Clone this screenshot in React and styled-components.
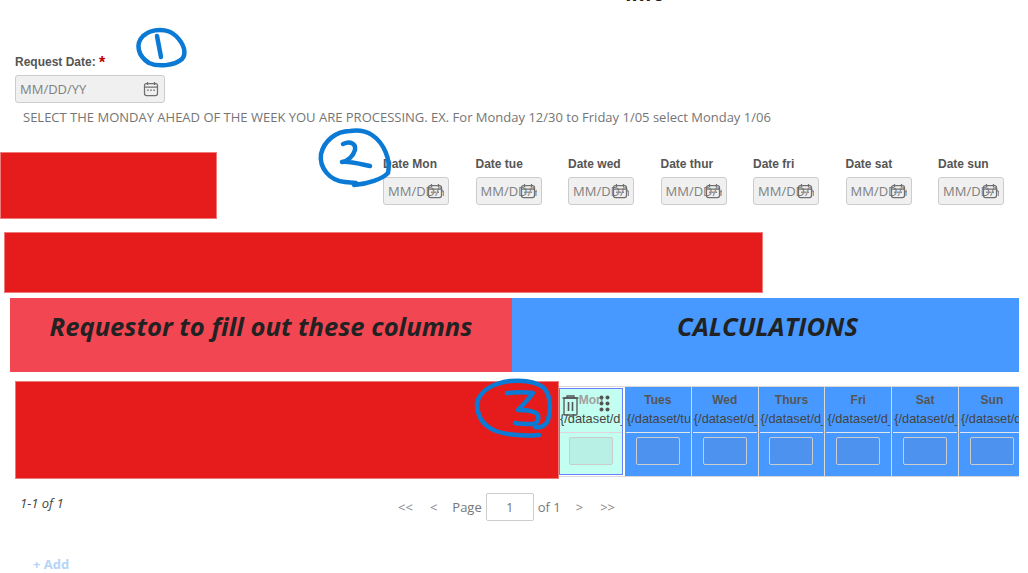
import React from 'react'
import styled, { createGlobalStyle } from 'styled-components'

const GlobalStyle = createGlobalStyle`
    html, body {
        margin: 0;
        padding: 0;
        background: #fff;
        overflow: hidden;
    }
    * {
        box-sizing: border-box;
    }
`

const days = ['Mon', 'tue', 'wed', 'thur', 'fri', 'sat', 'sun']

const columns = [
    { name: 'Mon', bind: '{/dataset/d_mon}' },
    { name: 'Tues', bind: '{/dataset/tues}' },
    { name: 'Wed', bind: '{/dataset/d_wed}' },
    { name: 'Thurs', bind: '{/dataset/d_thur}' },
    { name: 'Fri', bind: '{/dataset/d_fri}' },
    { name: 'Sat', bind: '{/dataset/d_sat}' },
    { name: 'Sun', bind: '{/dataset/d_sun}' },
]

const CalendarIcon = () => (
    <svg width="16" height="16" viewBox="0 0 16 16" fill="none" stroke="#707070" strokeWidth="1.25">
        <rect x="1.5" y="2.5" width="13" height="12" rx="2" />
        <path d="M1.5 6h13M4.5 1v3M11.5 1v3" />
        <path d="M4.2 9.2h1.4M7.3 9.2h1.4M10.4 9.2h1.4" strokeWidth="1.4" />
    </svg>
)

const DateField = ({ wide }) => (
    <DateBox $wide={wide}>
        <DateInput placeholder="MM/DD/YY" />
        <IconSlot>
            <CalendarIcon />
        </IconSlot>
    </DateBox>
)

const Annotations = () => (
    <Scribbles width="1028" height="573" viewBox="0 0 1028 573" fill="none" stroke="#0b7ad4" strokeWidth="4.5" strokeLinecap="round" strokeLinejoin="round">
        <path d="M143 36C152 28 168 28 176 36C184 44 187 53 182 59C174 66 158 67 149 63C138 56 135 44 143 36Z" />
        <path d="M157 36L161 57" />
        <path d="M350 131C336 131 324 141 321 154C319 168 330 181 345 182L356 183L354 185C368 184 382 179 388 173C391 160 384 143 372 135C366 131 358 130 350 131Z" />
        <path d="M343 144C350 141 356 143 355 150C353 156 348 161 342 162C349 161 360 164 370 166" />
        <path d="M477 403C480 390 494 383 510 381C522 380 536 381 544 388C551 396 551 410 548 420C546 426 540 428 535 427" />
        <path d="M477 403C477 416 483 426 496 431C510 436 526 436 539 435" />
        <path d="M507 393C516 392 525 392 533 393C528 400 522 406 518 410C526 410 535 411 538 415C539 420 537 424 532 424C526 424 520 424 515 423" />
    </Scribbles>
)

const App = () => (
    <Page>
        <GlobalStyle />
        <Title>Info</Title>

        <RequestSection>
            <FieldLabel>
                Request Date: <Required>*</Required>
            </FieldLabel>
            <DateField wide />
        </RequestSection>
        <Note>SELECT THE MONDAY AHEAD OF THE WEEK YOU ARE PROCESSING. EX. For Monday 12/30 to Friday 1/05 select Monday 1/06</Note>

        <DatesRow>
            <Redaction $width={217} $height={67} />
            <DatesGrid>
                {days.map((day) => (
                    <DateColumn key={day}>
                        <FieldLabel>Date {day}</FieldLabel>
                        <DateField />
                    </DateColumn>
                ))}
            </DatesGrid>
        </DatesRow>

        <WideRedaction>
            <Redaction $width={759} $height={61} />
        </WideRedaction>

        <Banner>
            <BannerCell $bg="#f34653" $shift={0}>Requestor to fill out these columns</BannerCell>
            <BannerCell $bg="#4799ff" $shift={4}>CALCULATIONS</BannerCell>
        </Banner>

        <TableRow>
            <Redaction $width={544} $height={98} />
            <Table>
                {columns.map((col, i) => (
                    <Column key={col.name} $selected={i === 0}>
                        <ColumnBody $selected={i === 0}>
                            <ColumnHead $selected={i === 0}>
                                <ColumnName $selected={i === 0}>{col.name}</ColumnName>
                                <ColumnBind $selected={i === 0}>{col.bind}</ColumnBind>
                            </ColumnHead>
                            <CellInput $selected={i === 0} />
                            {i === 0 && (
                                <ColumnTools>
                                    <svg width="17" height="21" viewBox="0 0 17 21" fill="none" stroke="#555" strokeWidth="1.3">
                                        <path d="M0.5 3h16M5 3V1h7v2" />
                                        <rect x="2" y="3" width="13" height="17" rx="1" />
                                        <path d="M6.5 7v9M10.5 7v9" strokeWidth="1.6" />
                                    </svg>
                                    <svg width="11" height="17" viewBox="0 0 11 17" fill="#555" stroke="none">
                                        <circle cx="2.5" cy="2.5" r="2" />
                                        <circle cx="8.5" cy="2.5" r="2" />
                                        <circle cx="2.5" cy="8.5" r="2" />
                                        <circle cx="8.5" cy="8.5" r="2" />
                                        <circle cx="2.5" cy="14.5" r="2" />
                                        <circle cx="8.5" cy="14.5" r="2" />
                                    </svg>
                                </ColumnTools>
                            )}
                        </ColumnBody>
                    </Column>
                ))}
            </Table>
        </TableRow>

        <PagerRow>
            <Count>1-1 of 1</Count>
            <Pager>
                <PagerItem $after={17}>&lt;&lt;</PagerItem>
                <PagerItem $after={15}>&lt;</PagerItem>
                <PagerItem $after={4} $text>Page</PagerItem>
                <PageInput defaultValue="1" />
                <PagerItem $before={4} $after={15} $text>of 1</PagerItem>
                <PagerItem $after={17}>&gt;</PagerItem>
                <PagerItem>&gt;&gt;</PagerItem>
            </Pager>
        </PagerRow>

        <AddLink>+ Add</AddLink>

        <Annotations />
    </Page>
)

export default App

const Page = styled.div`
    position: relative;
    width: 1028px;
    height: 573px;
    overflow: hidden;
    background: #fff;
    font-family: 'Open Sans', sans-serif;
`
const Title = styled.div`
    margin-top: -20px;
    padding-left: 625px;
    height: 28px;
    line-height: 28px;
    font-size: 20px;
    font-weight: 700;
    color: #222;
`
const RequestSection = styled.div`
    margin-top: 46px;
    padding-left: 15px;
    display: flex;
    flex-direction: column;
    gap: 5px;
`
const FieldLabel = styled.div`
    height: 16px;
    line-height: 16px;
    font-family: 'Liberation Sans', Arial, sans-serif;
    font-size: 12px;
    font-weight: 700;
    color: #555;
    white-space: nowrap;
`
const Required = styled.span`
    color: #c00000;
    font-size: 16px;
    line-height: 12px;
    vertical-align: -2px;
`
const DateBox = styled.div`
    position: relative;
    width: ${(p) => (p.$wide ? '150px' : '100%')};
    height: 28px;
`
const DateInput = styled.input`
    width: 100%;
    height: 100%;
    padding: 0 4px;
    background: #f0f0f0;
    border: 1px solid #ccc;
    border-radius: 3px;
    font-family: 'Open Sans', sans-serif;
    font-size: 13px;
    color: #777;
    outline: none;
    &::placeholder {
        color: #808080;
        opacity: 1;
    }
`
const IconSlot = styled.span`
    position: absolute;
    top: 6px;
    right: 6px;
    display: flex;
`
const Note = styled.div`
    margin-top: 5px;
    padding-left: 23px;
    height: 18px;
    line-height: 18px;
    font-size: 13px;
    color: #757575;
    white-space: nowrap;
`
const DatesRow = styled.div`
    margin-top: 26px;
    display: flex;
    align-items: flex-start;
`
const Redaction = styled.div`
    flex: none;
    width: ${(p) => p.$width}px;
    height: ${(p) => p.$height}px;
    background: #e61c1c;
    box-shadow: inset 0 0 0 1px #ee7a7a;
`
const DatesGrid = styled.div`
    margin-left: 166px;
    margin-top: 4px;
    display: grid;
    grid-template-columns: repeat(7, 66px);
    column-gap: 26.5px;
`
const DateColumn = styled.div`
    display: flex;
    flex-direction: column;
    gap: 5px;
`
const WideRedaction = styled.div`
    margin: 13px 0 0 4px;
`
const Banner = styled.div`
    margin: 5px 0 0 10px;
    width: 1009px;
    display: grid;
    grid-template-columns: 502px 1fr;
`
const BannerCell = styled.div`
    height: 74px;
    padding: 12px 0 0 ${(p) => p.$shift}px;
    background: ${(p) => p.$bg};
    text-align: center;
    font-size: 25.6px;
    line-height: 34px;
    font-weight: 700;
    font-style: italic;
    color: #222;
`
const TableRow = styled.div`
    margin: 9px 0 0 15px;
    width: 1004px;
    display: flex;
    align-items: flex-start;
    overflow: hidden;
`
const Table = styled.div`
    margin-top: 5px;
    flex: none;
    display: flex;
    height: 91px;
    border-top: 1px solid #d8d8d8;
    border-bottom: 1px solid #d8d8d8;
`
const Column = styled.div`
    flex: none;
    width: ${(p) => (p.$selected ? '66px' : '66.8px')};
    background: ${(p) => (p.$selected ? '#fff' : '#4799ff')};
    border-right: 1px solid ${(p) => (p.$selected ? 'transparent' : '#d8d8d8')};
`
const ColumnBody = styled.div`
    position: relative;
    height: ${(p) => (p.$selected ? '87px' : '100%')};
    margin: ${(p) => (p.$selected ? '1px 1px 1px 0' : '0')};
    background: ${(p) => (p.$selected ? '#c2fff0' : 'transparent')};
    border: ${(p) => (p.$selected ? '1px solid #6a7fff' : 'none')};
`
const ColumnHead = styled.div`
    height: ${(p) => (p.$selected ? '44px' : '46px')};
    margin: ${(p) => (p.$selected ? '0' : '0 1px')};
    padding-top: ${(p) => (p.$selected ? '3px' : '5px')};
    text-align: center;
    border-bottom: 1px solid ${(p) => (p.$selected ? '#e3d3dc' : '#dfe6ee')};
`
const ColumnName = styled.div`
    height: 16px;
    line-height: 16px;
    font-family: 'Liberation Sans', Arial, sans-serif;
    font-size: 12px;
    font-weight: 700;
    color: ${(p) => (p.$selected ? '#a0a0a0' : '#555')};
`
const ColumnBind = styled.div`
    margin-top: 2px;
    padding-left: ${(p) => (p.$selected ? '0' : '1px')};
    height: 18px;
    line-height: 18px;
    overflow: hidden;
    text-align: left;
    font-family: 'Liberation Sans', Arial, sans-serif;
    font-size: 12.8px;
    color: #444;
    white-space: nowrap;
`
const CellInput = styled.input`
    display: block;
    width: 44px;
    height: 28px;
    margin: 4px auto 0;
    background: ${(p) => (p.$selected ? '#b8f0e6' : '#4e92ef')};
    border: 1px solid #ccc;
    border-radius: 2px;
    outline: none;
`
const ColumnTools = styled.div`
    position: absolute;
    top: 6px;
    left: 2px;
    width: 48px;
    display: flex;
    justify-content: space-between;
    svg {
        display: block;
    }
`
const PagerRow = styled.div`
    margin-top: 14px;
    display: grid;
    grid-template-columns: 398px auto;
    height: 28px;
`
const Count = styled.div`
    padding-left: 20px;
    line-height: 21px;
    font-size: 13px;
    font-style: italic;
    color: #444;
`
const Pager = styled.div`
    display: flex;
    align-items: center;
    font-size: 13px;
`
const PagerItem = styled.span`
    margin-left: ${(p) => p.$before || 0}px;
    margin-right: ${(p) => p.$after || 0}px;
    color: ${(p) => (p.$text ? '#777' : '#888')};
`
const PageInput = styled.input`
    width: 48px;
    height: 28px;
    border: 1px solid #ccc;
    border-radius: 2px;
    text-align: center;
    font-family: 'Open Sans', sans-serif;
    font-size: 13px;
    color: #777;
    outline: none;
`
const AddLink = styled.div`
    margin: 33px 0 0 33px;
    line-height: 20px;
    font-size: 13px;
    font-weight: 700;
    color: #b5d5f7;
`
const Scribbles = styled.svg`
    position: absolute;
    top: 0;
    left: 0;
    pointer-events: none;
`
